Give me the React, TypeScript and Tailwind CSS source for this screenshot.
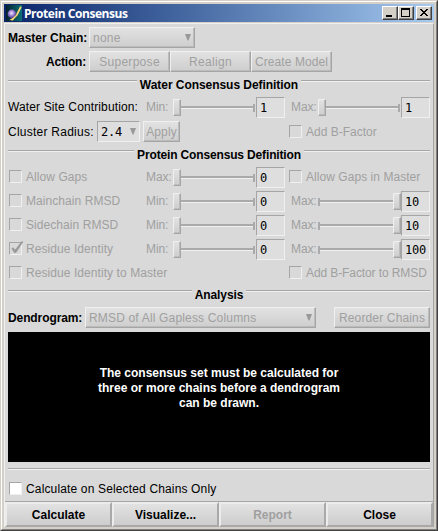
import type { ReactNode } from "react";

const RAISED =
  "border border-t-[#f0f0f0] border-l-[#f0f0f0] border-r-[#a5a5a5] border-b-[#a5a5a5] shadow-[inset_-1px_-1px_0_#bcbcbc] bg-linear-to-b from-[#e2e2e2] to-[#cecece]";

function Divider({ title, width }: { title: string; width: string }) {
  return (
    <div className="flex h-4 items-start gap-[3px]">
      <div className="mt-[5px] h-[2px] flex-1 border-t border-b border-t-[#a5a5a5] border-b-[#f0f0f0]" />
      <div className={`flex justify-center text-[12px] leading-[20px] font-bold whitespace-nowrap ${width}`}>{title}</div>
      <div className="mt-[5px] h-[2px] flex-1 border-t border-b border-t-[#a5a5a5] border-b-[#f0f0f0]" />
    </div>
  );
}

function Button({ children, className }: { children: ReactNode; className: string }) {
  return (
    <button className={`flex h-[21px] shrink-0 items-center justify-center pt-[2px] whitespace-nowrap text-[#a0a0a0] ${RAISED} ${className}`}>
      {children}
    </button>
  );
}

function Arrow() {
  return (
    <svg width="6" height="7" viewBox="0 0 6 7" className="shrink-0">
      <path d="M0 0H6L3.5 6.5H2.5Z" fill="#999" />
    </svg>
  );
}

function Combo({ children, className }: { children: ReactNode; className: string }) {
  return (
    <div className={`flex h-[21px] shrink-0 items-center justify-between pr-[3px] pl-[3px] whitespace-nowrap text-[#a0a0a0] ${RAISED} ${className}`}>
      <span className="pt-[2px]">{children}</span>
      <Arrow />
    </div>
  );
}

function Check({ checked, enabled, children, className = "" }: { checked?: boolean; enabled?: boolean; children: ReactNode; className?: string }) {
  return (
    <div className={`flex shrink-0 items-center gap-1 whitespace-nowrap ${enabled ? "text-black" : "text-[#a0a0a0]"} ${className}`}>
      <div
        className={`relative size-[13px] shrink-0 border border-t-[#a5a5a5] border-l-[#a5a5a5] border-r-[#f0f0f0] border-b-[#f0f0f0] ${enabled ? "bg-white" : "bg-[#d9d9d9]"}`}
      >
        {checked && (
          <svg width="14" height="14" viewBox="0 0 14 14" className="absolute -top-[3px] left-0">
            <path d="M1.8 8.5L3.2 7.8L5.2 10L11.5 1.8L13 1.8L6 12.5H4.2Z" fill="#999" stroke="#999" strokeWidth=".6" />
          </svg>
        )}
      </div>
      <span className="pt-[2px]">{children}</span>
    </div>
  );
}

function Slider({ end }: { end?: boolean }) {
  const thumb = <div className={`h-[17px] w-2 shrink-0 ${RAISED}`} />;
  const tick = <div className="h-2 w-[2px] shrink-0 bg-[#aaa]" />;
  return (
    <div className={`flex h-[21px] shrink-0 items-center ${end ? "w-[83px]" : "mr-px w-[82px]"}`}>
      {end ? tick : thumb}
      <div className="h-[3px] flex-1 border-t-2 border-b border-t-[#aaa] border-b-[#f0f0f0]" />
      {end ? thumb : tick}
    </div>
  );
}

function Range({ label, value, end, className }: { label: string; value: string; end?: boolean; className: string }) {
  return (
    <div className={`flex h-[21px] shrink-0 items-center ${className}`}>
      <span className="flex-1 tracking-[-0.1px] whitespace-nowrap text-[#a0a0a0]">{label}</span>
      <Slider end={end} />
      <div className="flex h-[21px] w-[29px] shrink-0 items-center border border-t-[#a5a5a5] border-l-[#a5a5a5] border-r-[#f0f0f0] border-b-[#f0f0f0] bg-[#dedede] pt-px pl-[3px] font-['DejaVu_Sans_Mono',monospace] text-[12px] tracking-[-0.22px]">
        {value}
      </div>
    </div>
  );
}

function CriteriaRow({ name, checked, label, className = "h-6", children }: { name: string; checked?: boolean; label?: string; className?: string; children: ReactNode }) {
  return (
    <div className={`flex items-start ${className}`}>
      <Check checked={checked} className="ml-px h-[19px] w-[137px] tracking-[0.07px]">{name}</Check>
      {label ? <Range label={label} value="0" className="w-[139px]" /> : <div className="w-[139px]" />}
      {children}
    </div>
  );
}

function CaptionButton({ children, className = "" }: { children: ReactNode; className?: string }) {
  return (
    <div className={`h-[14px] w-4 border border-t-white border-l-white border-r-[#404040] border-b-[#404040] bg-[#d4d0c8] shadow-[inset_-1px_-1px_0_#808080] ${className}`}>
      <svg width="14" height="12" viewBox="0 0 14 12" shapeRendering="crispEdges">{children}</svg>
    </div>
  );
}

function Logo() {
  return (
    <svg width="16" height="16" viewBox="0 0 16 16">
      <defs>
        <radialGradient id="ball" cx=".45" cy=".4" r=".6">
          <stop offset="0" stopColor="#f4eaff" />
          <stop offset=".5" stopColor="#9a80d0" />
          <stop offset="1" stopColor="#3c2c80" />
        </radialGradient>
        <linearGradient id="sky" x1="0" x2="1" y1="0" y2="0">
          <stop offset="0" stopColor="#04202c" />
          <stop offset="1" stopColor="#0c7078" />
        </linearGradient>
      </defs>
      <rect width="16" height="16" fill="url(#sky)" />
      <path d="M15.5 1L11.8 9L7 15.5L3.5 15L9 11L13.8 2Z" fill="#f0c860" />
      <circle cx="6" cy="9" r="4.4" fill="url(#ball)" />
      <path d="M15 2L11 10L5.5 15" stroke="#f8d878" strokeWidth="1.3" fill="none" />
    </svg>
  );
}

export default function App() {
  return (
    <div className="h-[531px] w-[438px] overflow-hidden border border-t-[#d4d0c8] border-l-[#d4d0c8] border-r-[#404040] border-b-[#404040] bg-[#d4d0c8] font-['Liberation_Sans',Arial,sans-serif] text-[12px] leading-[15px] text-black">
      <div className="flex h-[529px] flex-col border border-t-white border-l-white border-r-[#808080] border-b-[#808080] px-[2px] pt-[2px] pb-[2px]">
        <div className="flex h-[18px] shrink-0 items-center bg-linear-to-r from-[#0a246a] to-[#a6caf0] pr-[2px] pl-[2px]">
          <Logo />
          <span className="ml-[2px] flex-1 font-['Open_Sans',Tahoma,sans-serif] text-[12px] font-bold tracking-[-0.45px] text-white">Protein Consensus</span>
          <CaptionButton><rect x="3" y="8" width="6" height="2" /></CaptionButton>
          <CaptionButton><path d="M2 1H11V10H2ZM3 3V9H10V3Z" fillRule="evenodd" /></CaptionButton>
          <CaptionButton className="ml-[2px]">
            <path d="M3 2h2v1h1v1h2v-1h1v-1h2v1h-1v1h-1v1h-1v1h1v1h1v1h1v1h-2v-1h-1v-1h-2v1h-1v1h-2v-1h1v-1h1v-1h1v-1h-1v-1h-1v-1h-1z" />
          </CaptionButton>
        </div>

        <div className="mt-px flex flex-1 flex-col border border-t-[#f0f0f0] border-l-[#f0f0f0] border-r-[#a5a5a5] border-b-0 bg-[#d9d9d9]">
          <div className="flex h-[477px] flex-col pt-[3px] pr-[3px] pl-[3px]">
            <div className="flex h-6 items-start">
              <span className="w-[78px] pt-[4px] text-right font-bold whitespace-nowrap">Master Chain:</span>
              <Combo className="ml-[3px] w-[106px] tracking-[0.25px]">none</Combo>
            </div>
            <div className="flex h-6 items-start">
              <span className="w-[78px] pt-[4px] text-right font-bold tracking-[-0.2px]">Action:</span>
              <Button className="ml-[3px] w-[81px] tracking-[0.3px]">Superpose</Button>
              <Button className="w-[81px] tracking-[0.3px]">Realign</Button>
              <Button className="w-[81px] tracking-[0.1px]">Create Model</Button>
            </div>

            <div className="h-[22px] tracking-[-0.05px]"><Divider title="Water Consensus Definition" width="w-[158px]" /></div>
            <div className="flex h-6 items-start">
              <span className="w-[138px] pt-[3px] tracking-[0.13px] whitespace-nowrap">Water Site Contribution:</span>
              <Range label="Min:" value="1" className="w-[139px]" />
              <Range label="Max:" value="1" className="ml-[6px] w-[139px]" />
            </div>
            <div className="flex h-6 items-start">
              <span className="w-[89px] pt-[4px] tracking-[0.25px] whitespace-nowrap">Cluster Radius:</span>
              <div className="flex h-[21px] w-[43px] items-center justify-between border border-t-[#a5a5a5] border-l-[#a5a5a5] border-r-[#f0f0f0] border-b-[#f0f0f0] bg-[#dedede] pr-[3px] pl-[3px] font-['DejaVu_Sans_Mono',monospace] tracking-[-0.22px]">
                <span className="pt-px">2.4</span>
                <Arrow />
              </div>
              <Button className="ml-[3px] w-[37px] tracking-[0.1px]">Apply</Button>
              <Check className="mt-px ml-[109px] h-[19px]">Add B-Factor</Check>
            </div>

            <div className="h-[22px] tracking-[-0.15px]"><Divider title="Protein Consensus Definition" width="w-[164px]" /></div>
            <CriteriaRow name="Allow Gaps" label="Max:">
              <Check className="ml-1 h-[19px] tracking-[0.05px]">Allow Gaps in Master</Check>
            </CriteriaRow>
            <CriteriaRow name="Mainchain RMSD" label="Min:">
              <Range label="Max:" value="10" end className="ml-[6px] w-[139px]" />
            </CriteriaRow>
            <CriteriaRow name="Sidechain RMSD" label="Min:">
              <Range label="Max:" value="10" end className="ml-[6px] w-[139px]" />
            </CriteriaRow>
            <CriteriaRow name="Residue Identity" label="Min:" checked>
              <Range label="Max:" value="100" end className="ml-[6px] w-[139px]" />
            </CriteriaRow>
            <CriteriaRow name="Residue Identity to Master" className="h-[22px]">
              <Check className="ml-1 h-[19px] tracking-[-0.1px]">Add B-Factor to RMSD</Check>
            </CriteriaRow>

            <div className="h-[22px] tracking-[-0.1px]"><Divider title="Analysis" width="w-[48px]" /></div>
            <div className="flex h-[25px] items-start">
              <span className="w-[77px] pt-[4px] font-bold tracking-[-0.1px]">Dendrogram:</span>
              <Combo className="w-[231px] tracking-[0.17px]">RMSD of All Gapless Columns</Combo>
              <Button className="ml-auto w-24 tracking-[0.15px]">Reorder Chains</Button>
            </div>

            <div className="h-[130px] shrink-0 bg-black pt-[34px] text-center font-bold text-white">
              The consensus set must be calculated for<br />
              three or more chains before a dendrogram<br />
              can be drawn.
            </div>
            <div className="mt-[6px] h-[2px] shrink-0 border-t border-b border-t-[#a5a5a5] border-b-[#f0f0f0]" />
            <Check enabled className="mt-[9px] ml-px h-[19px] tracking-[0.15px]">Calculate on Selected Chains Only</Check>
          </div>

          <div className="grid flex-1 grid-cols-4 border-t border-[#a5a5a5] text-[12px] font-bold">
            {["Calculate", "Visualize...", "Report", "Close"].map((name) => (
              <button
                key={name}
                className={`border-2 border-t-[#ececec] border-l-[#ececec] border-r-[#a9a9a9] border-b-[#a9a9a9] bg-linear-to-b from-[#e2e2e2] to-[#cdcdcd] pt-px ${name === "Report" ? "text-[#a0a0a0]" : "text-black"}`}
              >
                {name}
              </button>
            ))}
          </div>
        </div>
      </div>
    </div>
  );
}
